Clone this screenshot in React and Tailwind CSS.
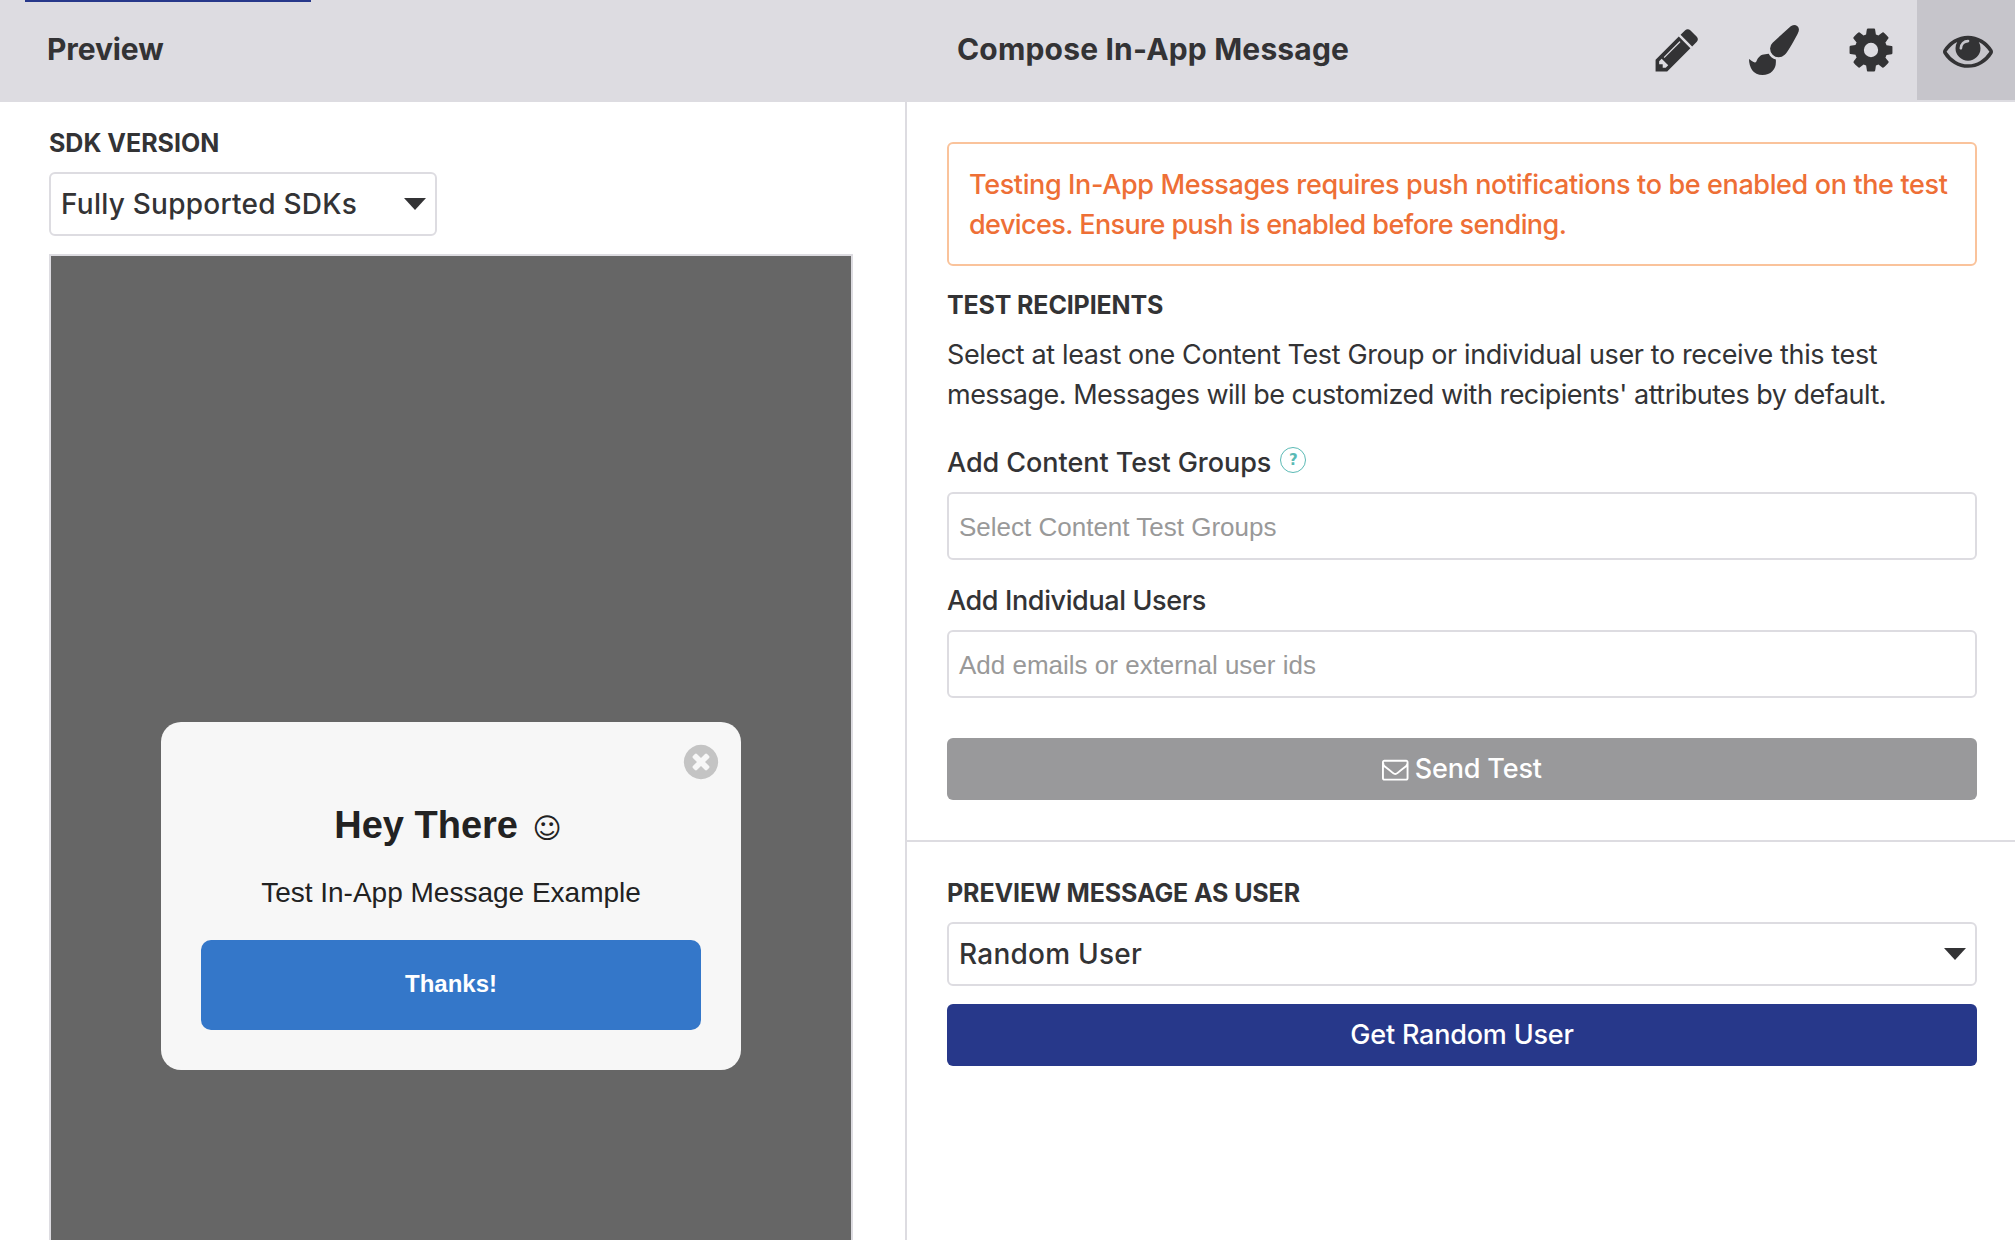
const PATHS = {
  pencil:
    'M491 1536l91-91-235-235-91 91v107h128v128h107zm523-928q0-22-22-22-10 0-17 7l-542 542q-7 7-7 17 0 22 22 22 10 0 17-7l542-542q7-7 7-17zm-54-192l416 416-832 832h-416v-416zm683 96q0 53-37 90l-166 166-416-416 166-165q36-38 90-38 53 0 91 38l235 234q37 39 37 91z',
  brush:
    'M1615 0q70 0 122.500 46.500t52.500 116.500q0 63-45 151-332 629-465 752-97 91-218 91-126 0-216.500-92.500t-90.500-219.500q0-128 92-212l638-579q59-54 130-54zm-909 1034q39 76 106.500 130t150.500 76l1 71q4 213-129.500 347t-348.500 134q-123 0-218-46.500t-152.500-127.500-86.500-183-29-220q7 5 41 30t62 44.500 59 36.500 46 17q41 0 55-37 25-66 57.500-112.500t69.500-76 88-47.500 103-25.500 125-10.500z',
  cog:
    'M1152 896q0-106-75-181t-181-75-181 75-75 181 75 181 181 75 181-75 75-181zm512-109v222q0 12-8 23t-20 13l-185 28q-19 54-39 91 35 50 107 138 10 12 10 25t-9 23q-27 37-99 108t-94 71q-12 0-26-9l-138-108q-44 23-91 38-16 136-29 186-7 28-36 28h-222q-14 0-24.500-8.500t-11.500-21.500l-28-184q-49-16-90-37l-141 107q-10 9-25 9-14 0-25-11-126-114-165-168-7-10-7-23 0-12 8-23 15-21 51-66.500t54-70.500q-27-50-41-99l-183-27q-13-2-21-12.500t-8-23.500v-222q0-12 8-23t19-13l186-28q14-46 39-92-40-57-107-138-10-12-10-24 0-10 9-23 26-36 98.500-107.500t94.500-71.500q13 0 26 10l138 107q44-23 91-38 16-136 29-186 7-28 36-28h222q14 0 24.500 8.500t11.500 21.500l28 184q49 16 90 37l142-107q9-9 24-9 13 0 25 10 129 119 165 170 7 8 7 22 0 12-8 23-15 21-51 66.500t-54 70.500q26 50 41 98l183 28q13 2 21 12.500t8 23.500z',
  eye: 'M1664 960q-152-236-381-353 61 104 61 225 0 185-131.500 316.500t-316.500 131.500-316.500-131.500-131.500-316.500q0-121 61-225-229 117-381 353 133 205 333.500 326.500t434.500 121.500 434.500-121.500 333.500-326.500zm-720-384q0-20-14-34t-34-14q-125 0-214.500 89.500t-89.500 214.500q0 20 14 34t34 14 34-14 14-34q0-86 61-147t147-61q20 0 34-14t14-34zm848 384q0 34-20 69-140 230-376.500 368.500t-499.500 138.500-499.500-139-376.500-368q-20-35-20-69t20-69q140-229 376.500-368t499.500-139 499.500 139 376.500 368q20 35 20 69z',
  envelope:
    'M1664 1504v-768q-32 36-69 66-268 206-426 338-51 43-83 67t-86.500 48.500-102.500 24.500h-2q-48 0-102.500-24.500t-86.500-48.500-83-67q-158-132-426-338-37-30-69-66v768q0 13 9.500 22.500t22.500 9.500h1472q13 0 22.500-9.500t9.500-22.500zm0-1051v-24.500l-.5-13-3-12.500-5.500-9-9-7.500-14-2.500h-1472q-13 0-22.500 9.500t-9.500 22.500q0 168 147 284 193 152 401 317 6 5 35 29.500t46 37.500 44.500 31.500 50.500 27.500 43 9h2q20 0 43-9t50.500-27.500 44.500-31.500 46-37.500 35-29.500q208-165 401-317 54-43 100.500-115.500t46.500-131.500zm128-37v1088q0 66-47 113t-113 47h-1472q-66 0-113-47t-47-113v-1088q0-66 47-113t113-47h1472q66 0 113 47t47 113z',
  close:
    'M1277 1122q0-26-19-45l-181-181 181-181q19-19 19-45 0-27-19-46l-90-90q-19-19-46-19-26 0-45 19l-181 181-181-181q-19-19-45-19-27 0-46 19l-90 90q-19 19-19 46 0 26 19 45l181 181-181 181q-19 19-19 45 0 27 19 46l90 90q19 19 46 19 26 0 45-19l181-181 181 181q19 19 45 19 27 0 46-19l90-90q19-19 19-46zm387-226q0 209-103 385.500t-279.500 279.500-385.500 103-385.500-103-279.500-279.500-103-385.500 103-385.500 279.500-279.500 385.500-103 385.500 103 279.500 279.500 103 385.500z',
};

function Icon({ name, className }) {
  return (
    <svg viewBox="0 0 1792 1792" fill="currentColor" className={className} aria-hidden="true">
      <path d={PATHS[name]} />
    </svg>
  );
}

function ToolTab({ name, active }) {
  return (
    <button
      aria-label={name}
      className={
        active
          ? 'flex h-[100px] w-[98px] items-center bg-[#c6c5cb] pl-[26px]'
          : 'flex h-[100px] w-[97px] items-center pl-[26px]'
      }
    >
      <Icon name={name} className="size-[50px]" />
    </button>
  );
}

function SectionTitle({ children, className }) {
  return <h2 className={`text-[25px] leading-8 font-bold whitespace-nowrap ${className}`}>{children}</h2>;
}

function Select({ children, className }) {
  return (
    <div
      className={`flex h-16 items-center justify-between rounded-md border-2 border-[#dddce1] pr-[9px] pl-2.5 text-[28px] leading-8 font-medium ${className}`}
    >
      {children}
      <svg viewBox="0 0 22 12" className="h-3 w-[22px]" aria-hidden="true">
        <path d="M0 0h22L11 12z" fill="#333335" />
      </svg>
    </div>
  );
}

function Field({ placeholder }) {
  return (
    <div className="mt-[13px] flex h-[68px] items-center rounded-md border-2 border-[#dddce1] pt-0.5 pl-2.5 font-['Liberation_Sans',sans-serif] text-[26px] text-[#999]">
      {placeholder}
    </div>
  );
}

export default function App() {
  return (
    <div className="relative flex h-[1240px] w-[2015px] flex-col overflow-hidden bg-white font-['Inter',sans-serif] text-[#333335]">
      <div className="absolute top-0 left-[25px] h-0.5 w-[286px] bg-[#27388a]" />
      <header className="flex h-[102px] shrink-0 border-b-2 border-[#dddce1] bg-[#dddce1] text-[30px] font-bold">
        <div className="flex w-[906px] items-center pb-0.5 pl-[47px] tracking-[-0.1px]">Preview</div>
        <div className="flex flex-1 items-center pb-0.5 pl-[51px] tracking-[0.18px]">Compose In-App Message</div>
        <nav className="flex">
          <ToolTab name="pencil" />
          <ToolTab name="brush" />
          <ToolTab name="cog" />
          <ToolTab name="eye" active />
        </nav>
      </header>

      <div className="flex flex-1">
        <section className="flex w-[905px] shrink-0 flex-col pt-[25px] pl-[49px]">
          <SectionTitle className="tracking-[0px]">SDK VERSION</SectionTitle>
          <Select className="mt-[13px] w-[388px]">
            <span className="tracking-[0.25px]">Fully Supported SDKs</span>
          </Select>
          <div className="mt-[18px] h-[990px] w-[804px] border-2 border-[#dddce1] bg-[#666] pt-[466px] pl-[110px]">
            <div className="relative h-[348px] w-[580px] rounded-[20px] bg-[#f7f7f7] px-10 pt-[81px] text-center font-['Liberation_Sans',sans-serif] text-[#222]">
              <button aria-label="Close" className="absolute top-5 left-[520px] text-[#c4c4c4]">
                <Icon name="close" className="size-10" />
              </button>
              <h1 className="-ml-1.5 text-[38px] leading-[44px] font-bold whitespace-nowrap">
                Hey There{' '}
                <span className="ml-1 inline-block h-[44px] align-top font-['DejaVu_Sans',sans-serif] text-[28px] leading-[51px] font-normal">☺</span>
              </h1>
              <p className="mt-[29px] text-[28px] leading-[34px]">Test In-App Message Example</p>
              <button className="mt-[30px] flex h-[90px] w-[500px] items-center justify-center rounded-[10px] bg-[#3477c9] pb-0.5 text-2xl font-bold text-white">
                Thanks!
              </button>
            </div>
          </div>
        </section>

        <section className="flex-1 border-l-2 border-[#dddce1]">
          <div className="flex flex-col border-b-2 border-[#dddce1] pt-10 pr-[38px] pb-10 pl-10">
            <p className="rounded-md border-2 border-[#fac39b] px-5 pt-[21px] pb-[19px] text-[27px] leading-10 font-medium whitespace-nowrap text-[#ee6f36]">
              <span className="tracking-[-0.37px]">
                Testing In-App Messages requires push notifications to be enabled on the test
              </span>
              <br />
              <span className="tracking-[-0.58px]">devices. Ensure push is enabled before sending.</span>
            </p>
            <SectionTitle className="mt-[23px] tracking-[-0.15px]">TEST RECIPIENTS</SectionTitle>
            <p className="mt-3.5 text-[27px] leading-10 whitespace-nowrap">
              <span className="tracking-[-0.38px]">
                Select at least one Content Test Group or individual user to receive this test
              </span>
              <br />
              <span className="tracking-[-0.51px]">
                message. Messages will be customized with recipients' attributes by default.
              </span>
            </p>
            <div className="mt-8 flex items-start text-[27px] leading-8 font-medium">
              <span className="tracking-[-0.05px]">Add Content Test Groups</span>
              <span className="ml-[9px] flex size-[26px] items-center justify-center rounded-full border border-[#5bbab5] font-['DejaVu_Sans',sans-serif] text-[15px] leading-none font-bold text-[#5bbab5]">
                ?
              </span>
            </div>
            <Field placeholder="Select Content Test Groups" />
            <div className="mt-[25px] text-[27px] leading-8 font-medium tracking-[-0.38px]">Add Individual Users</div>
            <Field placeholder="Add emails or external user ids" />
            <button className="mt-10 flex h-[62px] items-center justify-center gap-1.5 rounded-md bg-[#99999b] pt-px text-[27px] font-medium tracking-[-0.15px] text-white">
              <Icon name="envelope" className="size-[26.5px]" />
              Send Test
            </button>
          </div>
          <div className="flex flex-col pt-[35px] pr-[38px] pl-10">
            <SectionTitle className="tracking-[-0.12px]">PREVIEW MESSAGE AS USER</SectionTitle>
            <Select className="mt-[13px]">
              <span className="tracking-[0.25px]">Random User</span>
            </Select>
            <button className="mt-[18px] flex h-[62px] items-center justify-center rounded-md bg-[#27388a] pt-px text-[27px] font-medium tracking-[-0.2px] text-white">
              Get Random User
            </button>
          </div>
        </section>
      </div>
    </div>
  );
}
